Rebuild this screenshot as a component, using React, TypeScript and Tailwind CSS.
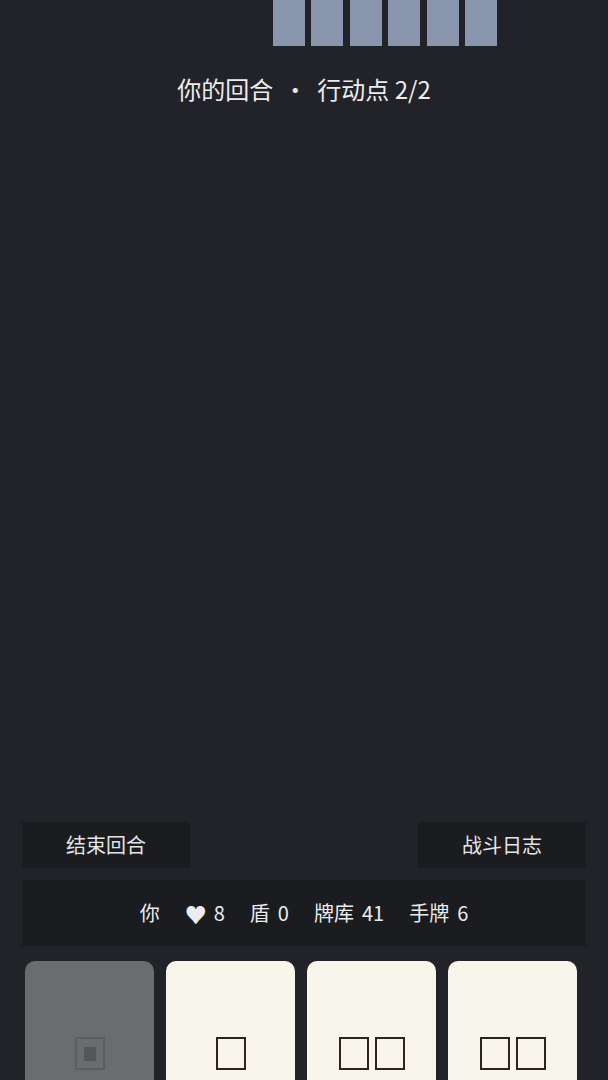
import React from 'react';

const cards = [
  { id: 1, disabled: true, glyphs: 1 },
  { id: 2, disabled: false, glyphs: 1 },
  { id: 3, disabled: false, glyphs: 2 },
  { id: 4, disabled: false, glyphs: 2 },
  { id: 5, disabled: false, glyphs: 1 },
  { id: 6, disabled: false, glyphs: 2 },
];

const stats = [
  { label: '盾', value: 0 },
  { label: '牌库', value: 41 },
  { label: '手牌', value: 6 },
];

const Tofu = ({ dim }: { dim?: boolean }) =>
  dim ? (
    <span className="flex h-[33px] w-[30px] items-center justify-center border-2 border-[#5c5d5f]">
      <span className="h-[14px] w-[12px] bg-[#55565a]" />
    </span>
  ) : (
    <span className="block h-[33px] w-[30px] border-2 border-[#2b2619]" />
  );

const App = () => {
  return (
    <div
      className="flex h-screen flex-col overflow-hidden bg-[#222329] text-[#ececec]"
      style={{ fontFamily: '"Noto Sans CJK SC", "Noto Sans", sans-serif' }}
    >
      {/* enemy hand */}
      <div className="flex justify-end gap-[6.4px] pr-[111px]">
        {[0, 1, 2, 3, 4, 5].map((i) => (
          <div key={i} className="h-[46px] w-[32px] bg-[#8a95ae]" />
        ))}
      </div>

      <div className="mt-[27px] flex justify-center gap-[10px] text-[24px] leading-[32px]">
        <span>你的回合</span>
        <span>·</span>
        <span>行动点 2/2</span>
      </div>

      <div className="flex-1" />

      <div className="h-[258px] shrink-0">
        <div className="mx-[22px] flex justify-between">
          <button className="h-[46px] w-[168px] bg-[#1b1c20] text-[20px] text-[#e4e4e4]">结束回合</button>
          <button className="h-[46px] w-[168px] bg-[#1b1c20] text-[20px] text-[#e4e4e4]">战斗日志</button>
        </div>

        <div className="mx-[22px] mt-[12px] flex h-[66px] items-center justify-center gap-[25px] bg-[#1b1c20] text-[20px]">
          <span>你</span>
          <span className="flex items-center">
            <span className="text-[22px] leading-none">♥</span>
            <span className="ml-[7px]">8</span>
          </span>
          {stats.map((s) => (
            <span key={s.label}>
              {s.label}
              <span className="ml-[8px]">{s.value}</span>
            </span>
          ))}
        </div>

        <div className="mx-[22px] mt-[15px] flex gap-[12px] overflow-hidden pl-[3px]">
          {cards.map((c) => (
            <div
              key={c.id}
              className={
                c.disabled
                  ? 'flex h-[170px] w-[129px] shrink-0 justify-center rounded-[10px] bg-[#6b6c6e] pt-[76px]'
                  : 'flex h-[170px] w-[129px] shrink-0 justify-center rounded-[10px] bg-[#f8f5ea] pt-[76px]'
              }
            >
              <div className="flex gap-[6px]">
                {Array.from({ length: c.glyphs }).map((_, i) => (
                  <Tofu key={i} dim={c.disabled} />
                ))}
              </div>
            </div>
          ))}
        </div>
      </div>
    </div>
  );
};

export default App;
